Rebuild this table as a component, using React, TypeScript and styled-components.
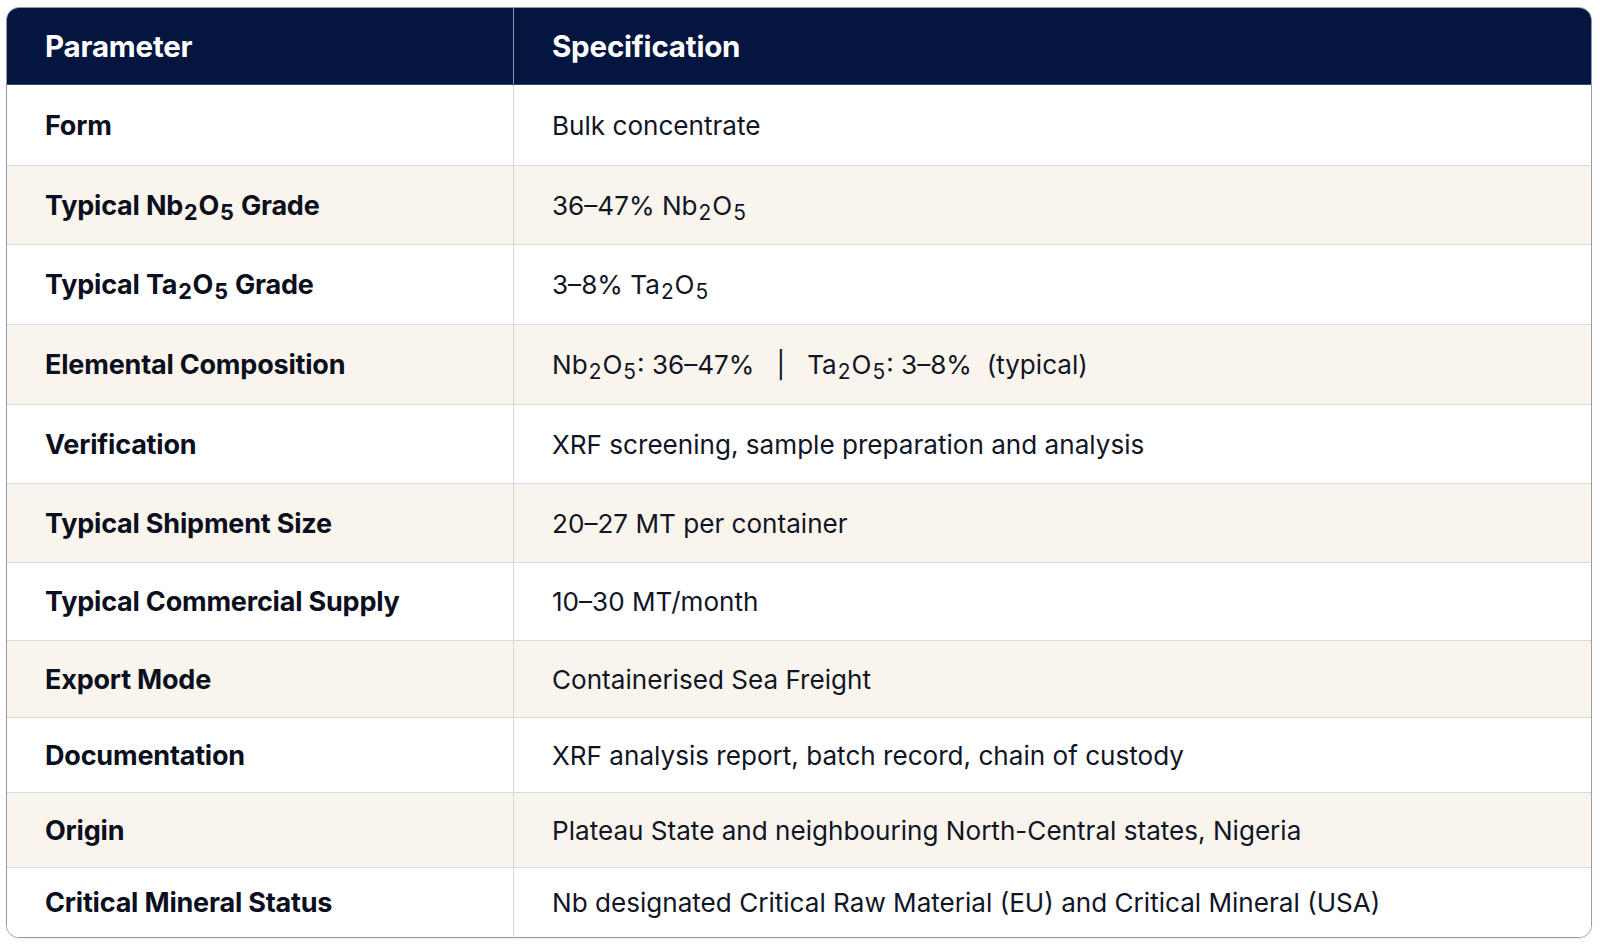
import React from "react";
import styled, { createGlobalStyle } from "styled-components";

const GlobalStyle = createGlobalStyle`
  html, body {
    margin: 0;
    padding: 0;
    background: #ffffff;
  }
  body {
    font-family: Inter, "Noto Sans", "Liberation Sans", sans-serif;
    color: #0d1122;
    -webkit-font-smoothing: antialiased;
  }
  * { box-sizing: border-box; }
`;

const Page = styled.div`
  width: 1600px;
  height: 947px;
  padding: 7px 8px 0 6px;
`;

const TableFrame = styled.div`
  width: 1586px;
  border: 1.5px solid #959aae;
  border-radius: 13px;
  overflow: hidden;
  display: flex;
  flex-direction: column;
  background: #ffffff;
  box-shadow: 0 1px 2px rgba(20, 30, 60, 0.08);
`;

const HeaderRow = styled.div`
  display: grid;
  grid-template-columns: 507px 1fr;
  height: 77px;
  background: #04153f;
  border-bottom: 1px solid #3b4a72;
`;

const HeaderCell = styled.div<{ $divider?: boolean }>`
  display: flex;
  align-items: center;
  padding: 0 38px;
  color: #ffffff;
  font-size: 29.5px;
  font-weight: 700;
  letter-spacing: -0.2px;
  border-right: ${(p) => (p.$divider ? "1.5px solid #8a91aa" : "none")};
`;

const Row = styled.div<{ $h: number; $alt: boolean; $first: boolean }>`
  display: grid;
  grid-template-columns: 507px 1fr;
  height: ${(p) => p.$h}px;
  background: ${(p) => (p.$alt ? "#f9f5ec" : "#ffffff")};
  border-top: ${(p) => (p.$first ? "none" : "1.5px solid #d8d8dd")};
`;

const LabelCell = styled.div`
  display: flex;
  align-items: center;
  padding: 0 38px;
  font-size: 27px;
  font-weight: 700;
  letter-spacing: -0.2px;
  color: #0b0f20;
  border-right: 1.5px solid #d6d6db;
`;

const ValueCell = styled.div`
  display: flex;
  align-items: center;
  padding: 0 38px;
  font-size: 26.1px;
  font-weight: 400;
  letter-spacing: 0;
  color: #111526;
  white-space: pre;
`;

const Formula = styled.span`
  white-space: nowrap;
`;

const Sub = styled.sub`
  font-size: 0.8em;
  vertical-align: -0.24em;
  line-height: 0;
  margin: 0 1px;
`;

const Sep = styled.span`
  display: inline-block;
  margin: 0 22px;
`;

const Nb = () => (
  <Formula>
    Nb<Sub>2</Sub>O<Sub>5</Sub>
  </Formula>
);
const Ta = () => (
  <Formula>
    Ta<Sub>2</Sub>O<Sub>5</Sub>
  </Formula>
);

type Item = { label: React.ReactNode; value: React.ReactNode; h: number };

const rows: Item[] = [
  { label: "Form", value: "Bulk concentrate", h: 80 },
  {
    label: (
      <span>
        Typical <Nb /> Grade
      </span>
    ),
    value: (
      <span>
        36–47% <Nb />
      </span>
    ),
    h: 79,
  },
  {
    label: (
      <span>
        Typical <Ta /> Grade
      </span>
    ),
    value: (
      <span>
        3–8% <Ta />
      </span>
    ),
    h: 80,
  },
  {
    label: "Elemental Composition",
    value: (
      <span>
        <Nb />: 36–47%
        <Sep>|</Sep>
        <Ta />: 3–8% {" "}(typical)
      </span>
    ),
    h: 80,
  },
  { label: "Verification", value: "XRF screening, sample preparation and analysis", h: 79 },
  { label: "Typical Shipment Size", value: "20–27 MT per container", h: 79 },
  { label: "Typical Commercial Supply", value: "10–30 MT/month", h: 78 },
  { label: "Export Mode", value: "Containerised Sea Freight", h: 77 },
  { label: "Documentation", value: "XRF analysis report, batch record, chain of custody", h: 75 },
  { label: "Origin", value: "Plateau State and neighbouring North-Central states, Nigeria", h: 75 },
  {
    label: "Critical Mineral Status",
    value: "Nb designated Critical Raw Material (EU) and Critical Mineral (USA)",
    h: 70,
  },
];

export default function App() {
  return (
    <>
      <GlobalStyle />
      <Page>
        <TableFrame>
          <HeaderRow>
            <HeaderCell $divider>Parameter</HeaderCell>
            <HeaderCell>Specification</HeaderCell>
          </HeaderRow>
          {rows.map((r, i) => (
            <Row key={i} $h={r.h} $alt={i % 2 === 1} $first={i === 0}>
              <LabelCell>{r.label}</LabelCell>
              <ValueCell>{r.value}</ValueCell>
            </Row>
          ))}
        </TableFrame>
      </Page>
    </>
  );
}
